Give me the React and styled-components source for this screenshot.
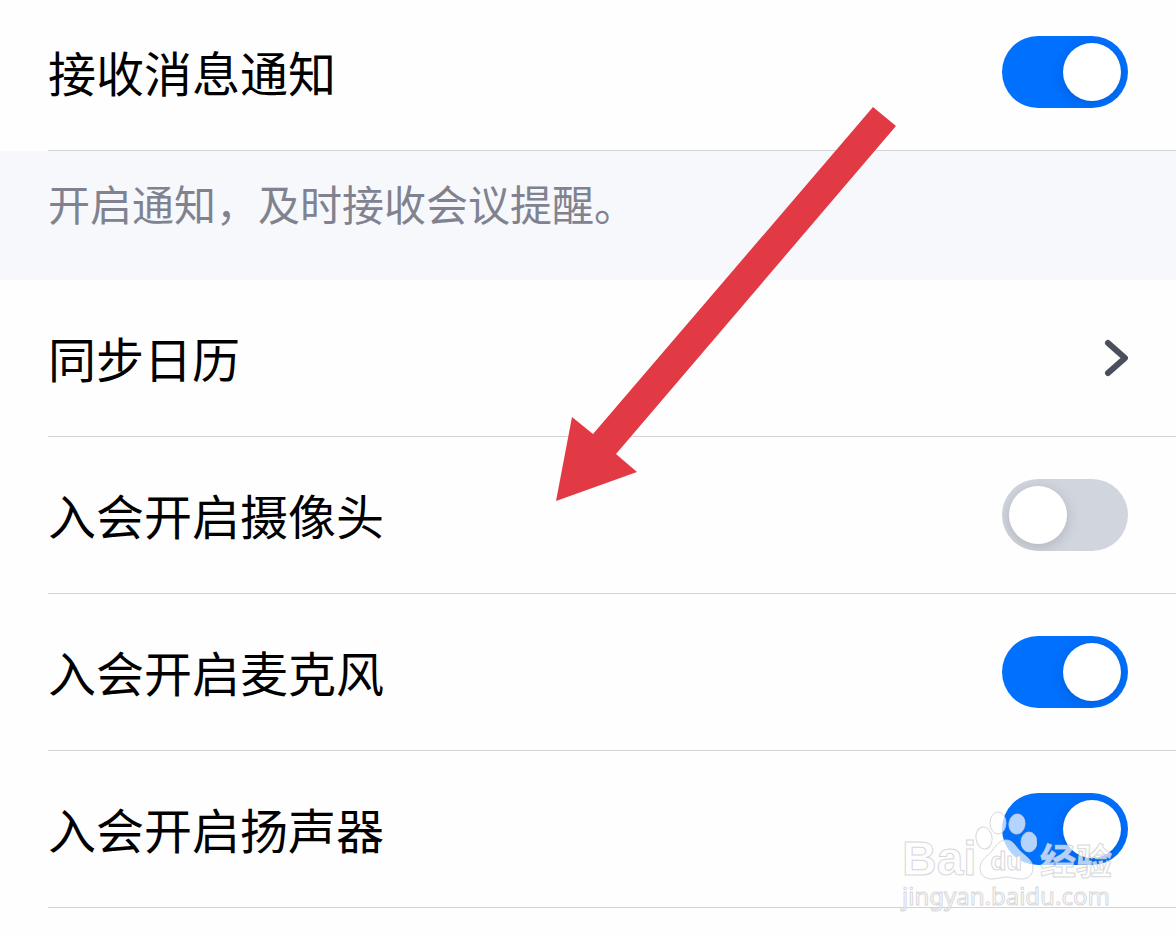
import React from "react";
import styled, { createGlobalStyle } from "styled-components";

const GlobalStyle = createGlobalStyle`
  * {
    box-sizing: border-box;
  }

  body {
    margin: 0;
    background: #fefefe;
    color: #000;
    font-family: "Noto Sans CJK SC", "Noto Sans", sans-serif;
    overflow: hidden;
  }
`;

const Page = styled.main`
  position: relative;
  min-height: 100vh;
`;

const Row = styled.div`
  position: relative;
  display: flex;
  align-items: center;
  justify-content: space-between;
  margin-left: 48px;
  padding: ${props => (props.$first ? 36 : 42)}px 48px 42px 0;
  border-bottom: 1px solid #d3d4d6;
`;

const Label = styled.label`
  padding-bottom: 2px;
  font-size: 48px;
  line-height: 70px;
`;

const LinkRow = styled(Row).attrs({ as: "a" })`
  color: inherit;
  text-decoration: none;
`;

const Switch = styled.input`
  appearance: none;
  flex: none;
  display: block;
  width: 126px;
  height: 72px;
  margin: 0;
  padding: 7px;
  border-radius: 36px;
  background: #d1d5de;
  overflow: hidden;
  cursor: pointer;

  &::before {
    content: "";
    display: block;
    width: 58px;
    height: 58px;
    border-radius: 50%;
    background: #fff;
    box-shadow: 0 3px 14px rgba(0, 0, 0, 0.16);
  }

  &:checked {
    background: #0070ff;
  }

  &:checked::before {
    margin-left: auto;
  }
`;

const WhiteBand = styled.div`
  background: #fefefe;
`;

const NoteBand = styled.div`
  background: #f7f8fc;
`;

const Note = styled.p`
  margin: 0;
  padding: 24px 48px 49px;
  color: #80838f;
  font-size: 42px;
  line-height: 56px;
`;

const Chevron = styled.svg`
  flex: none;
  width: 24px;
  height: 38px;
`;

const Arrow = styled.svg`
  position: absolute;
  top: 106px;
  left: 556px;
  width: 341px;
  height: 396px;
  pointer-events: none;
`;

const Watermark = styled.div`
  position: absolute;
  top: 60px;
  right: 64px;
  width: 210px;
  color: rgba(255, 255, 255, 0.7);
  pointer-events: none;
  white-space: nowrap;
  -webkit-text-stroke: 1px rgba(205, 205, 208, 0.8);
`;

const Brand = styled.div`
  display: flex;
  align-items: flex-end;
  justify-content: space-between;
  height: 70px;
`;

const Latin = styled.span`
  font: bold 48px/44px "Liberation Sans", Arial, sans-serif;
`;

const Chinese = styled.span`
  font-size: 36px;
  font-weight: 700;
  line-height: 44px;
`;

const Paw = styled.span`
  position: relative;
  display: flex;
  align-items: flex-end;
  justify-content: center;
  width: 62px;
  height: 70px;
  margin-left: -4px;
  padding-bottom: 7px;
  color: #fff;
  font: bold 26px/26px "Liberation Sans", Arial, sans-serif;

  svg {
    position: absolute;
    inset: 0;
  }
`;

const PawText = styled.span`
  position: relative;
`;

const Site = styled.div`
  font: 24px/30px "Noto Sans", sans-serif;
`;

const BaiduMark = () => (
  <Watermark>
    <Brand>
      <Latin>Bai</Latin>
      <Paw>
        <svg
          width="62"
          height="70"
          viewBox="0 0 62 70"
          fill="rgba(255,255,255,0.7)"
          stroke="rgba(205,205,208,0.8)"
        >
          <ellipse cx="9" cy="27" rx="8" ry="11" transform="rotate(-8 9 27)" />
          <ellipse cx="23" cy="12" rx="8" ry="11" />
          <ellipse cx="42" cy="13" rx="8" ry="10" transform="rotate(8 42 13)" />
          <ellipse cx="54" cy="31" rx="8" ry="10" />
          <path d="M31 29c-7 0-10 6-14 11S5 49 5 57c0 7 5 11 12 11 6 0 9-2 14-2s9 2 15 2c7 0 12-4 12-11 0-8-8-12-13-17S38 29 31 29z" />
        </svg>
        <PawText>du</PawText>
      </Paw>
      <Chinese>经验</Chinese>
    </Brand>
    <Site>jingyan.baidu.com</Site>
  </Watermark>
);

const SwitchRow = ({ id, label, defaultChecked, first, children }) => (
  <Row $first={first}>
    <Label htmlFor={id}>{label}</Label>
    <Switch
      id={id}
      type="checkbox"
      role="switch"
      defaultChecked={defaultChecked}
    />
    {children}
  </Row>
);

const App = () => (
  <>
    <GlobalStyle />
    <Page>
      <NoteBand>
        {/* the row sits on white, only the note is tinted */}
        <WhiteBand>
          <SwitchRow id="notify" label="接收消息通知" defaultChecked first />
        </WhiteBand>
        <Note>开启通知，及时接收会议提醒。</Note>
      </NoteBand>
      <LinkRow href="#calendar">
        <Label as="span">同步日历</Label>
        <Chevron viewBox="0 0 24 38" fill="none">
          <path
            d="M4 4 21 19 4 34"
            stroke="#4a4f5c"
            strokeWidth="6"
            strokeLinecap="round"
            strokeLinejoin="round"
          />
        </Chevron>
      </LinkRow>
      <SwitchRow id="camera" label="入会开启摄像头" />
      <SwitchRow id="microphone" label="入会开启麦克风" defaultChecked />
      <SwitchRow id="speaker" label="入会开启扬声器" defaultChecked>
        <BaiduMark />
      </SwitchRow>
      <Arrow viewBox="0 0 341 396">
        <path
          d="M0 395 16 311 37 328 317 1 340 20 60 348 81 366z"
          fill="#e23a45"
        />
      </Arrow>
    </Page>
  </>
);

export default App;
